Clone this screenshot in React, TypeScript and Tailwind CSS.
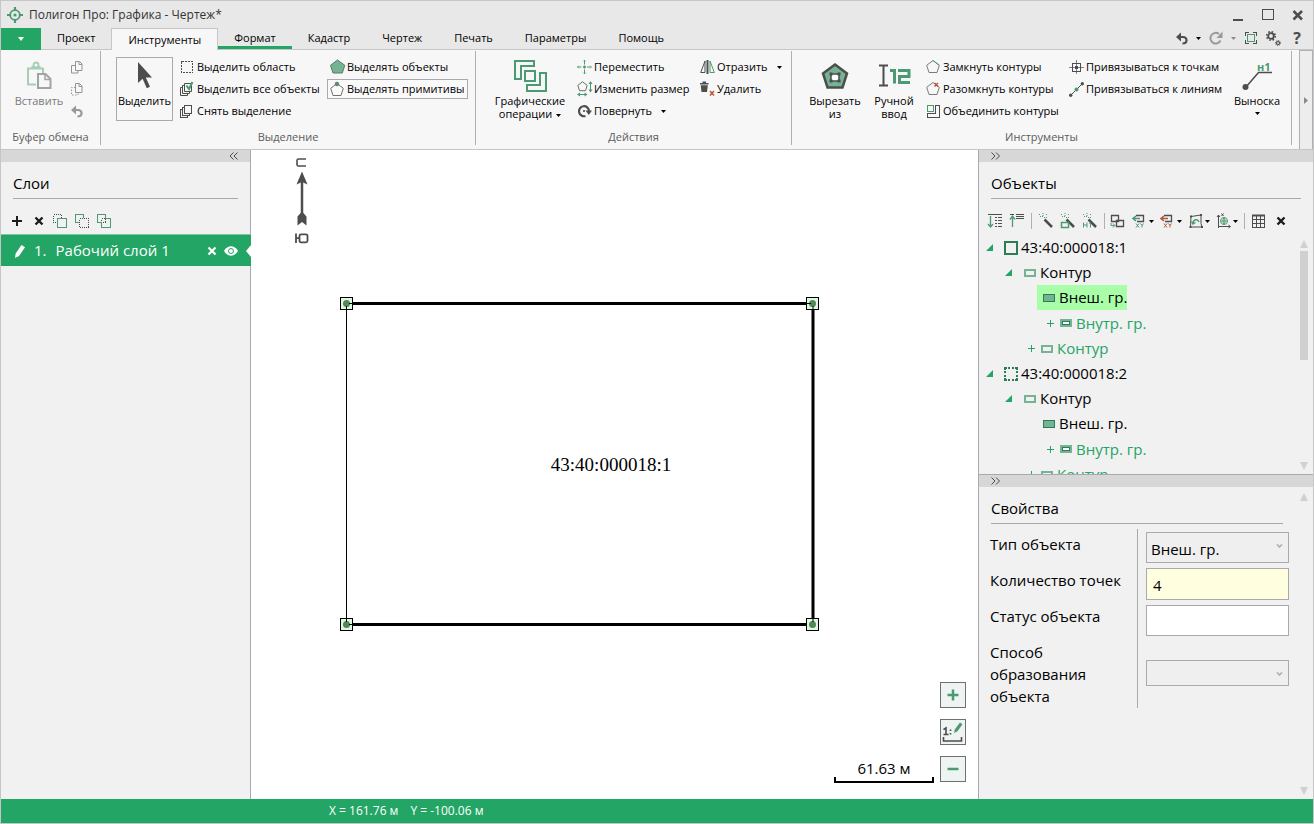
import type { ReactNode } from "react";
import { clsx } from "clsx";

const GREEN = "#4c9a71";
const DARK = "#4d4d4d";
const RED = "#b5573a";

interface IconProps {
  w?: number;
  h?: number;
  crisp?: boolean;
  children: ReactNode;
}

function Icon({ w = 16, h = 16, crisp, children }: IconProps) {
  return (
    <svg
      width={w}
      height={h}
      viewBox={`0 0 ${w} ${h}`}
      fill="none"
      stroke={DARK}
      className="block shrink-0"
      shapeRendering={crisp ? "crispEdges" : undefined}
      aria-hidden="true"
    >
      {children}
    </svg>
  );
}

function Caret({ className = "text-black" }: { className?: string }) {
  return (
    <svg width="5" height="3" viewBox="0 0 5 3" className={clsx("inline-block shrink-0", className)} aria-hidden="true">
      <path d="M0 0h5L2.5 3z" fill="currentColor" />
    </svg>
  );
}

/* ---------- ribbon icons ---------- */

const PENTAGON = "M7 1.5 13.3 6.3 11 13.5H3L.7 6.3z";

const LogoIcon = () => (
  <Icon>
    <g stroke={GREEN}>
      <circle cx="8" cy="8" r="4.8" strokeWidth="1.8" />
      <path d="M8 0v4M8 12v4M0 8h4M12 8h4" strokeWidth="2.2" />
      <circle cx="8" cy="8" r="1.6" fill={GREEN} stroke="none" />
    </g>
  </Icon>
);

const PasteIcon = () => (
  <Icon w={26} h={30}>
    <path d="M10 23.5H2v-16h15V12" stroke="#a6cdb8" strokeWidth="2" />
    <path d="M5.5 7.5V5h9v2.5z" fill="#a6cdb8" stroke="none" />
    <circle cx="10" cy="4" r="2.5" fill="#f7f7f7" stroke="#a6cdb8" strokeWidth="1.8" />
    <path d="M12 13h7.5l5 5v9H12z" stroke="#a3a3a3" strokeWidth="2" fill="#f7f7f7" />
    <path d="M19 13v5.5h5.5" stroke="#a3a3a3" strokeWidth="1.5" />
  </Icon>
);

const CopyIcon = () => (
  <Icon w={12} h={13}>
    <path d="M4.500.5h4l2.500 2.500v6.500H4.500zM8 .5v3h3M4.500 4.500h-4v7.500h6.500V9.500" stroke="#949494" />
  </Icon>
);

const CutIcon = () => (
  <Icon w={12} h={13}>
    <path d="M4.500.5h4l2.500 2.500v6.500H4.500zM8 .5v3h3" stroke="#949494" />
    <path d="M4.500 4.500h-4v7.500h6.500V9.500" strokeDasharray="1.5 1.5" stroke="#949494" />
  </Icon>
);

const UndoIcon = ({ pale }: { pale?: boolean }) => (
  <Icon w={12} h={13}>
    <g opacity={pale ? 0.55 : 1}>
      <path d="M3 5h4c4.800 0 4.800 6.500-.5 6.500" strokeWidth="2.2" />
      <path d="M0 5 5 .5v9z" fill={DARK} stroke="none" />
    </g>
  </Icon>
);

const RedoIcon = () => (
  <Icon w={14} h={14}>
    <g opacity="0.5">
      <path d="M11.500 9.500A5.300 5.300 0 1 1 10 3" strokeWidth="2" />
      <path d="M13.500.5v6.500H7.500z" fill={DARK} stroke="none" />
    </g>
  </Icon>
);

const CursorIcon = () => (
  <Icon w={24} h={30}>
    <path d="M5 1v21l4.600-4.200 4.200 9.400 3.200-1.400-4.200-9.200h6.200z" fill={DARK} stroke="none" />
  </Icon>
);

const AreaIcon = () => (
  <Icon crisp>
    <rect x="1.5" y="2.5" width="11" height="11" strokeDasharray="2 1" />
  </Icon>
);

const AllIcon = ({ checked }: { checked?: boolean }) => (
  <Icon crisp={!checked}>
    <path d="M4.500 2.500h7v8h-7zM4.500 4.500h-2v8h7v-2M2.500 6.500h-2v8h7v-2" />
    {checked && <path d="m6.500 4.500 2.500 3.500 3.500-7" stroke={GREEN} strokeWidth="2" />}
  </Icon>
);

const PolyFilledIcon = () => (
  <Icon>
    <path d="M7.500 1 14.800 6.300 12.300 14H3L.5 6.300z" fill="#74b494" stroke="#5d7a6a" />
  </Icon>
);

const PolyVertexIcon = () => (
  <Icon>
    <path d="M7 2.500 13.300 7.300 11 14.500H3L.7 7.300z" stroke="#707070" />
    <circle cx="7" cy="3" r="1.8" fill={GREEN} stroke="#5d7a6a" />
  </Icon>
);

const OperationsIcon = () => (
  <Icon w={34} h={34} crisp>
    <g stroke={GREEN} strokeWidth="2">
      <path d="M2 2h19v5H8v13H2z" />
      <path d="M12 12h10v10H12zM27 14h6v18H14v-6h13z" />
    </g>
  </Icon>
);

const MoveIcon = () => (
  <Icon>
    <path d="M7.500 1v4.500M7.500 10.500v4.500M0 8h4.500M10 8h4.500" stroke={GREEN} />
    <path d="M7.500 6.500v3M6 8h3" stroke={GREEN} strokeWidth="1.5" />
    <path d="m6 2.500 1.500-1.500L9 2.500M6 13.500 7.500 15 9 13.500M2 6.500.5 8 2 9.500M13 6.500 14.500 8 13 9.500" stroke={GREEN} opacity="0.5" />
  </Icon>
);

const ResizeIcon = () => (
  <Icon>
    <path d="m5.500.8 4.700 3.600-1.700 5.300H2.500L.8 4.400z" stroke="#707070" />
    <path d="M13.500 2v8M2 13.500h7" stroke={GREEN} />
    <path d="m13.500 0 2 3h-4zM13.500 11.500l2-3h-4zM0 13.500l3-2v4zM10.500 13.500l-3-2v4z" fill={GREEN} stroke="none" />
  </Icon>
);

const RotateIcon = () => (
  <Icon>
    <path d="M8.500 13A5 5 0 1 1 12 8" strokeWidth="2.2" />
    <path d="M8.500 7.500H15L11.800 12z" fill={DARK} stroke="none" />
    <circle cx="7" cy="8" r="1.1" fill={DARK} stroke="none" />
  </Icon>
);

const MirrorIcon = () => (
  <Icon>
    <path d="M7.500 1v14" strokeWidth="2" />
    <path d="M5 2v11.500H.7z" />
    <path d="M10 2v11.500h4.300z" stroke={GREEN} />
  </Icon>
);

const TrashIcon = () => (
  <Icon>
    <path d="M0 2h8.500v1.500H0zM2.500.5h3.500V2H2.500zM.7 4.200h7.100L7 11H1.500z" fill={DARK} stroke="none" />
    <path d="m10 10 4 4.500m0-4.500-4 4.500" stroke={RED} strokeWidth="1.5" />
  </Icon>
);

const CutOutIcon = () => (
  <Icon w={28} h={28}>
    <path d="M14 2.500 26 11.500 21.500 25.500h-15L2 11.500z" fill="#74b494" strokeWidth="2.5" />
    <path d="M10 12h8v7h-8z" fill="#fff" strokeWidth="1.5" />
    <path d="M8.500 10.500h3v3h-3zM16.500 10.500h3v3h-3zM8.500 17.500h3v3h-3zM16.500 17.500h3v3h-3z" fill={DARK} stroke="none" />
  </Icon>
);

const ManualIcon = () => (
  <Icon w={34} h={28}>
    <path d="M2 3.500h9M2 23.500h9M6.500 3v21" strokeWidth="2" />
    <path d="M13 8.500h4.500v13M21 8.500h11v6H22.500v6H33" stroke={GREEN} strokeWidth="3" />
  </Icon>
);

const ClosePolyIcon = () => (
  <Icon>
    <path d={PENTAGON} stroke="#7a7a7a" />
    <path d="M7 1.500 13.300 6.300" stroke={GREEN} />
  </Icon>
);

const OpenPolyIcon = () => (
  <Icon>
    <path d={PENTAGON} stroke="#7a7a7a" />
    <path d="m8.500 2 3.500 3.500M12 2 8.500 5.500" stroke={RED} strokeWidth="1.5" />
  </Icon>
);

const MergeIcon = () => (
  <Icon crisp>
    <path d="M9.500 2.500h4v12H1.500v-4h8z" />
    <path d="M1.500 2.500h6v6h-6z" stroke={GREEN} />
  </Icon>
);

const SnapPointIcon = () => (
  <Icon crisp>
    <path d="M7.500 1v14M0 8.500h15" stroke="#808080" />
    <path d="M3.500 4.500h8v8h-8z" />
    <path d="M6 7h3v3H6z" fill={DARK} stroke="none" />
  </Icon>
);

const SnapLineIcon = () => (
  <Icon>
    <path d="M1.500 14.500 13.500 2.500" />
    <circle cx="1.7" cy="14.3" r="1.7" fill={DARK} stroke="none" />
    <circle cx="13.3" cy="2.7" r="1.7" fill={DARK} stroke="none" />
    <circle cx="7.5" cy="8.500" r="2" fill={GREEN} stroke="none" />
  </Icon>
);

const CalloutIcon = () => (
  <svg width="32" height="32" viewBox="0 0 32 32" fill="none" className="block" aria-hidden="true">
    <path d="M5 27 17.500 12.500H31" stroke={DARK} strokeWidth="1.5" />
    <circle cx="4.5" cy="27" r="3" fill={DARK} />
    <text x="16" y="11" fontSize="11" fontWeight="700" fill={GREEN} fontFamily="Open Sans, sans-serif">
      н1
    </text>
  </svg>
);

/* ---------- ribbon parts ---------- */

function SmallButton({ icon, label, active, caret }: { icon: ReactNode; label: string; active?: boolean; caret?: boolean }) {
  return (
    <div className="flex h-[22px] items-center">
      <button
        type="button"
        className={clsx(
          "flex h-5 items-center gap-px border px-0.5 whitespace-nowrap",
          active ? "border-[#a9a9b0] bg-[#fafafa]" : "border-transparent"
        )}
      >
        {icon}
        <span>{label}</span>
        {caret && <Caret className="ml-2 text-black" />}
      </button>
    </div>
  );
}

function BigButton({ icon, label, active, disabled, caret, className }: {
  icon: ReactNode;
  label: string;
  active?: boolean;
  disabled?: boolean;
  caret?: "inline" | "below";
  className?: string;
}) {
  return (
    <button
      type="button"
      disabled={disabled}
      className={clsx(
        "mt-px flex h-16 shrink-0 flex-col items-center border leading-[13px]",
        active ? "border-[#a9a9b0]" : "border-transparent",
        disabled && "text-[#7b7b7b]",
        className
      )}
    >
      <span className="flex h-9 items-center justify-center">{icon}</span>
      <span className="text-center whitespace-pre-line">
        {label}
        {caret === "inline" && <Caret className="ml-1 align-middle text-black" />}
      </span>
      {caret === "below" && (
        <span className="flex h-3 items-center">
          <Caret />
        </span>
      )}
    </button>
  );
}

function RibbonGroup({ title, className, children }: { title: string; className?: string; children: ReactNode }) {
  return (
    <section className="mt-px mb-1 flex shrink-0 flex-col border-r border-[#b0b0b4] pt-[5px]">
      <div className={clsx("flex h-[73px] shrink-0 items-start", className)}>{children}</div>
      <h2 className="text-center leading-4 text-[#5c5c5c]">{title}</h2>
    </section>
  );
}

function Ribbon() {
  return (
    <div className="flex h-[100px] shrink-0 border-b border-[#c6c6c6] bg-[#f7f7f7] text-[11px]">
      <div className="flex min-w-0 flex-1 overflow-hidden">
        <RibbonGroup title="Буфер обмена" className="w-[99px] pl-2.5">
          <BigButton icon={<PasteIcon />} label="Вставить" disabled className="w-14" />
          <div className="flex flex-col pl-1">
            <button type="button" aria-label="Копировать" className="flex h-[22px] items-center"><CopyIcon /></button>
            <button type="button" aria-label="Вырезать" className="flex h-[22px] items-center"><CutIcon /></button>
            <button type="button" aria-label="Отменить" className="flex h-[22px] items-center"><UndoIcon pale /></button>
          </div>
        </RibbonGroup>

        <RibbonGroup title="Выделение" className="pr-1.5 pl-[15px]">
          <BigButton icon={<CursorIcon />} label="Выделить" active className="w-[57px]" />
          <div className="ml-1 w-[150px]">
            <SmallButton icon={<AreaIcon />} label="Выделить область" />
            <SmallButton icon={<AllIcon checked />} label="Выделить все объекты" />
            <SmallButton icon={<AllIcon />} label="Снять выделение" />
          </div>
          <div className="w-[142px]">
            <SmallButton icon={<PolyFilledIcon />} label="Выделять объекты" />
            <SmallButton icon={<PolyVertexIcon />} label="Выделять примитивы" active />
          </div>
        </RibbonGroup>

        <RibbonGroup title="Действия" className="pr-1.5 pl-3.5">
          <BigButton icon={<OperationsIcon />} label={"Графические\nоперации"} caret="inline" className="w-20" />
          <div className="ml-1 w-[123px]">
            <SmallButton icon={<MoveIcon />} label="Переместить" />
            <SmallButton icon={<ResizeIcon />} label="Изменить размер" />
            <SmallButton icon={<RotateIcon />} label="Повернуть" caret />
          </div>
          <div className="w-[88px]">
            <SmallButton icon={<MirrorIcon />} label="Отразить" caret />
            <SmallButton icon={<TrashIcon />} label="Удалить" />
          </div>
        </RibbonGroup>

        <RibbonGroup title="Инструменты" className="pr-1.5 pl-[13px]">
          <BigButton icon={<CutOutIcon />} label={"Вырезать\nиз"} className="w-[60px]" />
          <BigButton icon={<ManualIcon />} label={"Ручной\nввод"} className="w-[58px]" />
          <div className="w-[143px]">
            <SmallButton icon={<ClosePolyIcon />} label="Замкнуть контуры" />
            <SmallButton icon={<OpenPolyIcon />} label="Разомкнуть контуры" />
            <SmallButton icon={<MergeIcon />} label="Объединить контуры" />
          </div>
          <div className="w-[163px]">
            <SmallButton icon={<SnapPointIcon />} label="Привязываться к точкам" />
            <SmallButton icon={<SnapLineIcon />} label="Привязываться к линиям" />
          </div>
          <BigButton icon={<CalloutIcon />} label="Выноска" caret="below" className="w-14" />
        </RibbonGroup>
      </div>
      <button type="button" aria-label="Прокрутить" className="flex w-3.5 items-center justify-center border border-b-0 border-[#b0b0b4] bg-[#ededed]">
        <svg width="4" height="7" viewBox="0 0 4 7" aria-hidden="true"><path d="M0 0v7l4-3.500z" fill="#8a8a8a" /></svg>
      </button>
    </div>
  );
}

/* ---------- title and tabs ---------- */

function TitleBar() {
  return (
    <header className="flex h-[27px] shrink-0 items-center pr-[9px] pl-1.5">
      <LogoIcon />
      <h1 className="ml-1.5 flex-1 text-xs text-[#333]">Полигон Про: Графика - Чертеж*</h1>
      <div className="flex items-center gap-[18px]">
        <button type="button" aria-label="Свернуть">
          <Icon w={12} h={14} crisp><path d="M1 12h10" strokeWidth="2" /></Icon>
        </button>
        <button type="button" aria-label="Развернуть">
          <Icon w={12} h={14} crisp><path d="M0 1h12M.5 1v11M11.500 1v11M0 11.500h12" /></Icon>
        </button>
        <button type="button" aria-label="Закрыть">
          <Icon w={12} h={14}><path d="m1.500 3 8.500 8.500M10 3 1.500 11.500" strokeWidth="2.5" /></Icon>
        </button>
      </div>
    </header>
  );
}

const TABS = ["Проект", "Инструменты", "Формат", "Кадастр", "Чертеж", "Печать", "Параметры", "Помощь"];

function TabBar() {
  return (
    <nav className="flex h-[22px] shrink-0 items-end text-[11px]">
      <button type="button" aria-label="Меню" className="flex h-[22px] w-10 items-center justify-center bg-[#22a565]">
        <svg width="6" height="4" viewBox="0 0 6 4" aria-hidden="true"><path d="M0 0h6L3 4z" fill="#fff" /></svg>
      </button>
      <div className="flex h-[22px] flex-1 border-b border-[#c6c6c6]">
        {TABS.map((tab) => (
          <button
            key={tab}
            type="button"
            className={clsx(
              "flex items-center px-4 leading-4",
              tab === "Инструменты" && "h-[22px] border border-b-0 border-[#c6c6c6] bg-[#f7f7f7]",
              tab === "Формат" && "h-[21px] border-b-3 border-[#22a565] pt-px",
              tab !== "Инструменты" && tab !== "Формат" && "h-5"
            )}
          >
            {tab}
          </button>
        ))}
        <div className="ml-auto flex h-5 items-center gap-2 pr-2">
          <button type="button" aria-label="Отменить"><UndoIcon /></button>
          <Caret />
          <button type="button" aria-label="Повторить"><RedoIcon /></button>
          <Caret className="text-[#8a8a8a]" />
          <button type="button" aria-label="Во весь экран">
            <Icon w={14} h={14} crisp>
              <path d="M1.500 5V1.500H5M9 1.500h3.500V5M12.500 9v3.500H9M5 12.500H1.500V9" />
              <path d="M3.500 3.500h7v7h-7z" stroke={GREEN} />
            </Icon>
          </button>
          <button type="button" aria-label="Настройки">
            <Icon w={15} h={15}>
              <circle cx="5" cy="5" r="2.8" strokeWidth="1.8" />
              <circle cx="5" cy="5" r="4.3" strokeWidth="1.5" strokeDasharray="1.7 1.68" />
              <circle cx="12" cy="12" r="1.5" strokeWidth="1.2" />
              <circle cx="12" cy="12" r="2.5" strokeDasharray="1 0.96" />
            </Icon>
          </button>
          <button type="button" className="w-4 text-base leading-5 font-bold text-[#4d4d4d]">?</button>
        </div>
      </div>
    </nav>
  );
}

/* ---------- layers panel ---------- */

function LayersPanel() {
  return (
    <aside className="flex w-[250px] shrink-0 flex-col border-r border-[#a9a9b0] bg-[#f1f1f1]">
      <div className="flex h-3 items-center justify-end bg-[#d7d7d7] pr-3">
        <button type="button" aria-label="Свернуть панель слоёв">
          <Icon w={9} h={8}><path d="M4.500.5 1 4l3.500 3.500M8.500.5 5 4l3.500 3.500" /></Icon>
        </button>
      </div>
      <h2 className="mx-3 mt-2.5 border-b border-[#a9a9a9] pb-1 text-[15px] leading-[22px]">Слои</h2>
      <div className="flex h-[22px] items-center gap-2 mt-[11px] mb-0.5 pl-2">
        <button type="button" aria-label="Добавить слой">
          <Icon w={14} h={14}><path d="M3 7h10M8 2v10" stroke="#1c1c1c" strokeWidth="2" /></Icon>
        </button>
        <button type="button" aria-label="Удалить слой">
          <Icon w={14} h={14}><path d="m4.500 3.500 7 7M11.500 3.500l-7 7" stroke="#1c1c1c" strokeWidth="2.4" /></Icon>
        </button>
        <button type="button" aria-label="Переместить вверх">
          <Icon w={14} h={14} crisp>
            <path d="M4.500 8.500h-4v-8h8v4" strokeDasharray="1 1" />
            <path d="M4.500 4.500h9v9h-9z" stroke={GREEN} />
          </Icon>
        </button>
        <button type="button" aria-label="Переместить вниз">
          <Icon w={14} h={14} crisp>
            <path d="M4.500 4.500h9v9h-9z" strokeDasharray="1 1" />
            <path d="M3.500 8.500h-3v-8h8v3" stroke={GREEN} />
          </Icon>
        </button>
        <button type="button" aria-label="Объединить слои">
          <Icon w={14} h={14} crisp>
            <path d="M4.500 4.500h4v4h-4z" strokeDasharray="1 1" />
            <path d="M4.500 8.500h-4v-8h8v4M8.500 4.500h5v9h-9v-5" stroke={GREEN} />
          </Icon>
        </button>
      </div>
      <div className="-mr-px flex h-8 items-center border-t border-[#7fc9a2] bg-[#22a565] pl-3 text-[15px] text-white">
        <Icon w={14} h={16}><path d="m2 15 .7-4.500L8.500 2l3.500 2.300L6 13z" fill="#fff" stroke="none" /></Icon>
        <span className="ml-[7px]">1.</span>
        <span className="ml-[9px] flex-1">Рабочий слой 1</span>
        <button type="button" aria-label="Убрать слой">
          <Icon w={10} h={10}><path d="m1.500 1.500 7 7M8.500 1.500l-7 7" stroke="#fff" strokeWidth="2.2" /></Icon>
        </button>
        <button type="button" aria-label="Видимость слоя" className="ml-[7px]">
          <Icon w={14} h={10}>
            <path d="M0 5c3.500-6.200 10.500-6.200 14 0-3.500 6.200-10.500 6.200-14 0z" fill="#fff" stroke="none" />
            <circle cx="7" cy="5" r="2.5" stroke="#22a565" />
          </Icon>
        </button>
        <svg width="5" height="12" viewBox="0 0 5 12" className="ml-2" aria-hidden="true">
          <path d="M5 0v12L0 6z" fill="#fff" />
        </svg>
      </div>
    </aside>
  );
}

/* ---------- drawing canvas ---------- */

const CORNERS = [
  [95, 153],
  [561, 153],
  [95, 474],
  [561, 474],
];

function Drawing() {
  return (
    <main className="relative min-w-0 flex-1 bg-white">
      <svg viewBox="0 0 727 649" className="block h-full w-full" role="img" aria-label="Чертеж участка">
        <path d="M95.500 153.500v321" stroke="#000" fill="none" />
        <path d="M95.500 153.500H562V474.500H95.500" stroke="#000" strokeWidth="3" fill="none" />
        {CORNERS.map(([x, y]) => (
          <g key={`${x}-${y}`}>
            <rect x={x - 5.5} y={y - 5.5} width="12" height="12" fill="#e3f5e3" stroke="#000" />
            <circle cx={x + 0.5} cy={y + 0.5} r="3.5" fill="#4f8a55" />
          </g>
        ))}
        <path d="M95.500 156v4M98 153.500h4M95.500 468v4M98 474.500h4M562 156v4M555 153.500h5M562 468v4" stroke="#000" />
        <text x="360" y="321" textAnchor="middle" fontSize="19" fontFamily="Liberation Serif, serif">
          43:40:000018:1
        </text>
      </svg>

      <svg width="16" height="92" viewBox="0 0 16 92" fill="none" className="absolute top-1.5 left-[43px]" aria-label="Север и юг">
        <path d="M12 3H4.500q-1.500 0-1.500 1.500v4Q3 10 4.500 10H12" stroke={DARK} strokeWidth="1.6" />
        <path d="M8 26v36" stroke={DARK} strokeWidth="2.5" />
        <path d="M8 15.500 13.500 28.500 8 26 2.500 28.500zM3.500 60.500 8 55.500l4.500 5v9L8 66 3.500 69.500z" fill={DARK} />
        <path d="M2 77.500V87M2 82.200H5.500M7 78.300h5q1.500 0 1.500 1.500v5q0 1.500-1.500 1.500H7q-1.500 0-1.500-1.500v-5q0-1.500 1.500-1.500z" stroke={DARK} strokeWidth="1.8" />
      </svg>

      <div className="absolute right-11 bottom-4 w-[100px] border-2 border-t-0 border-black text-center">
        <div className="-mt-[21px] pb-px text-[15px] leading-6">61.63 м</div>
      </div>

      <div className="absolute right-3 bottom-[17px] flex flex-col gap-[11px]">
        <button type="button" aria-label="Приблизить" className="flex size-[26px] items-center justify-center border border-[#707070] bg-[#eef4f2]">
          <Icon w={12} h={12}><path d="M.5 6h11M6 .5v11" stroke={GREEN} strokeWidth="2.5" /></Icon>
        </button>
        <button type="button" aria-label="Масштаб" className="flex size-[26px] items-center justify-center border border-[#707070] bg-[#eef4f2]">
          <Icon w={22} h={22}>
            <path d="M1.500 16v4h18v-4M1.500 8.500 4 7v6.500M1.500 13.500h5M8.500 8.500v1.500M8.500 12v1.500" strokeWidth="1.6" />
            <path d="m12 12 .8-3.500L18 1.500l2.500 1.800-5 7z" fill={GREEN} stroke="none" />
          </Icon>
        </button>
        <button type="button" aria-label="Отдалить" className="flex size-[26px] items-center justify-center border border-[#707070] bg-[#eef4f2]">
          <Icon w={12} h={12}><path d="M.5 6h11" stroke={GREEN} strokeWidth="2.5" /></Icon>
        </button>
      </div>
    </main>
  );
}

/* ---------- objects panel ---------- */

function PanelStrip({ label }: { label: string }) {
  return (
    <div className="flex h-3 shrink-0 items-center bg-[#d7d7d7] pl-3">
      <button type="button" aria-label={label}>
        <Icon w={10} h={8}><path d="M.5.5 4 4 .5 7.500M5 .5 8.500 4 5 7.500" /></Icon>
      </button>
    </div>
  );
}

const Wand = () => (
  <>
    <path d="m6.500 6.500 7.500 7.500" strokeWidth="2.5" />
    <path d="M5 0v3M2 3.500h3M6 4.500h3M1.500 1v1M8.500 1v1.500" stroke={GREEN} strokeDasharray="1 1" />
  </>
);

const Divider = () => <span className="h-4 w-px shrink-0 bg-[#b0b0b4]" />;

function Tool({ label, caret, children }: { label: string; caret?: boolean; children: ReactNode }) {
  return (
    <button type="button" aria-label={label} className="flex shrink-0 items-center gap-px">
      <Icon>{children}</Icon>
      {caret && <Caret />}
    </button>
  );
}

function ObjectTools() {
  return (
    <div className="mt-[11px] flex h-[22px] shrink-0 items-center justify-between pr-6 pl-2">
      <Tool label="Развернуть дерево">
        <path d="M1 1.500h14M8 4.500h2M11 4.500h4M8 7.500h2M11 7.500h4M8 10.500h2M11 10.500h4M8 13.500h2M11 13.500h4" />
        <path d="M3.500 3v10M1 11l2.500 3L6 11" stroke={GREEN} strokeWidth="1.3" />
      </Tool>
      <Tool label="Свернуть дерево">
        <path d="M1 1.500h4M7 1.500h8M7 3.500h8M7 5.500h8" />
        <path d="M3.500 14V4M1 6.500 3.500 3 6 6.500" stroke={GREEN} strokeWidth="1.3" />
      </Tool>
      <Divider />
      <Tool label="Мастер"><Wand /></Tool>
      <Tool label="Мастер контуров"><Wand /><path d="M1.500 9.500h7v5h-7z" stroke={GREEN} strokeWidth="1.5" /></Tool>
      <Tool label="Мастер точек"><Wand /><path d="M1.500 9.500v5M1.500 12h3.500M5 9.500v5M7 10.500l1.500-1v5" stroke={GREEN} /></Tool>
      <Divider />
      <Tool label="Копировать объект">
        <path d="M1.500 2.500h7v6h-7zM6.500 7.500h7v6h-7z" strokeWidth="1.3" />
        <path d="M1 10v2.500h3.500M3 10.500l2 2-2 2" stroke={GREEN} />
      </Tool>
      <Tool label="Импорт координат" caret>
        <path d="M4 2.500h7.500v6H5" strokeWidth="1.3" />
        <path d="M1 5.500h7M4 3 1 5.500 4 8" stroke={GREEN} strokeWidth="1.5" />
        <path d="m4 10.500 3 4m0-4-3 4M8.500 10.500l1.500 2 1.500-2M10 12.500v2" stroke={GREEN} />
      </Tool>
      <Tool label="Экспорт координат" caret>
        <path d="M4 2.500h7.500v6H5" strokeWidth="1.3" />
        <path d="M1 5.500h7M4 3 1 5.500 4 8" stroke={RED} strokeWidth="1.5" />
        <path d="m4 10.500 3 4m0-4-3 4M8.500 10.500l1.500 2 1.500-2M10 12.500v2" stroke={RED} />
      </Tool>
      <Tool label="Направление обхода" caret>
        <path d="M3 3.500 13 2v8.500L14 14H2.500z" />
        <path d="M2 2.500h2v2H2zM12 1h2v2h-2zM1.500 13h2v2h-2zM13 13h2v2h-2z" fill={DARK} stroke="none" />
        <path d="M5 10.500c0-4.500 5-5 6-1.500M3.500 8.500 5 11l2.500-1.500" stroke={GREEN} strokeWidth="1.4" />
      </Tool>
      <Tool label="Система координат" caret>
        <path d="M2.500 15V2M1 4l1.500-2L4 4M2 13.500h12M12.500 12l2 1.500-2 1.500M5.500.5l2 2.500m0-2.500-2 2.500" />
        <circle cx="8" cy="8" r="3.5" stroke={GREEN} />
        <path d="M4.500 8h7M8 4.500v7M8 4.500q-3 3.500 0 7M8 4.500q3 3.500 0 7" stroke={GREEN} strokeWidth="0.8" />
      </Tool>
      <Divider />
      <Tool label="Таблица">
        <path d="M1.500 2.500h12v12h-12zM1.500 6.500h12M1.500 10.500h12M5.500 2.500v12M9.500 2.500v12" shapeRendering="crispEdges" />
        <path d="M1 2.500h13" strokeWidth="2" />
      </Tool>
      <Tool label="Удалить">
        <path d="m4.500 4.500 7 7M11.500 4.500l-7 7" stroke="#1c1c1c" strokeWidth="2.4" />
      </Tool>
    </div>
  );
}

type NodeKind = "parcel" | "dashed" | "contour" | "outer" | "inner" | "addContour";

interface TreeNode {
  id: number;
  kind: NodeKind;
  label: string;
  selected?: boolean;
}

const TREE: TreeNode[] = [
  { id: 1, kind: "parcel", label: "43:40:000018:1" },
  { id: 2, kind: "contour", label: "Контур" },
  { id: 3, kind: "outer", label: "Внеш. гр.", selected: true },
  { id: 4, kind: "inner", label: "Внутр. гр." },
  { id: 5, kind: "addContour", label: "Контур" },
  { id: 6, kind: "dashed", label: "43:40:000018:2" },
  { id: 7, kind: "contour", label: "Контур" },
  { id: 8, kind: "outer", label: "Внеш. гр." },
  { id: 9, kind: "inner", label: "Внутр. гр." },
  { id: 10, kind: "addContour", label: "Контур" },
];

const INDENT: Record<NodeKind, string> = {
  parcel: "pl-[7px]",
  dashed: "pl-[7px]",
  contour: "pl-[26px]",
  outer: "pl-[58px]",
  inner: "pl-[67px]",
  addContour: "pl-12",
};

const Expander = () => (
  <svg width="7" height="7" viewBox="0 0 7 7" className="shrink-0" aria-hidden="true">
    <path d="M7 0v7H0z" fill="#22a565" />
  </svg>
);

function NodeIcon({ kind }: { kind: NodeKind }) {
  if (kind === "parcel" || kind === "dashed") {
    return (
      <Icon w={14} h={14} crisp>
        {kind === "parcel" && <rect x="1" y="1" width="12" height="12" stroke="#2c7d55" strokeWidth="2" />}
        {kind === "dashed" && (
          <path
            d="M0 1h3M4 1h2M8 1h2M11 1h3M0 13h3M4 13h2M8 13h2M11 13h3M1 0v3M1 4v2M1 8v2M1 11v3M13 0v3M13 4v2M13 8v2M13 11v3"
            stroke="#2c7d55"
            strokeWidth="2"
          />
        )}
      </Icon>
    );
  }
  return (
    <Icon w={12} h={8} crisp>
      {kind === "outer" && <rect x=".5" y=".5" width="11" height="7" fill="#74b494" stroke="#2c7d55" />}
      {kind === "inner" && (
        <>
          <rect x="0" y="0" width="12" height="8" fill="#74b494" stroke="none" />
          <rect x="2.5" y="2.5" width="7" height="3" fill="#fff" stroke="#2c7d55" />
        </>
      )}
      {(kind === "contour" || kind === "addContour") && <rect x="1" y="1" width="10" height="6" stroke="#74b494" strokeWidth="2" />}
    </Icon>
  );
}

function TreeRow({ node }: { node: TreeNode }) {
  const root = node.kind === "parcel" || node.kind === "dashed";
  const add = node.kind === "inner" || node.kind === "addContour";
  return (
    <li
      className={clsx(
        "flex items-center",
        node.kind === "inner" ? "h-[26px]" : "h-[25px]",
        add && "text-[#22a565]",
        INDENT[node.kind]
      )}
    >
      {(root || node.kind === "contour") && <Expander />}
      {add && <Icon w={9} h={9} crisp><path d="M1 4.500h7M4.500 1v7" stroke="#22a565" /></Icon>}
      <span
        className={clsx(
          "flex h-full items-center whitespace-nowrap",
          root && "ml-[11px] gap-[3px]",
          node.kind === "contour" && "ml-3 gap-1",
          node.kind === "outer" && "gap-1 pl-1.5",
          add && "ml-[5px] gap-1",
          node.selected && "bg-[#a8ffa8]"
        )}
      >
        <NodeIcon kind={node.kind} />
        {node.label}
      </span>
    </li>
  );
}

function ScrollArrow({ up }: { up?: boolean }) {
  return (
    <svg width="8" height="8" viewBox="0 0 8 8" className="block shrink-0" aria-hidden="true">
      <path d={up ? "M4 0 8 8H0z" : "M0 0h8L4 8z"} fill="#d0d0d0" />
    </svg>
  );
}

function ObjectsPanel() {
  return (
    <section className="flex h-[calc(50%-1px)] flex-col">
      <PanelStrip label="Свернуть панель объектов" />
      <h2 className="mx-3 mt-2.5 border-b border-[#a9a9a9] pb-1 text-[15px] leading-[22px]">Объекты</h2>
      <ObjectTools />
      <div className="mt-[3px] flex min-h-0 flex-1">
        <ul className="flex-1 overflow-hidden text-[15px]">
          {TREE.map((node) => (
            <TreeRow key={node.id} node={node} />
          ))}
        </ul>
        <div className="flex w-4 flex-col items-center pt-[5px] pb-1 pr-0.5">
          <ScrollArrow up />
          <div className="mt-[3px] h-[109px] w-2 bg-[#d0d0d0]" />
          <div className="flex-1" />
          <ScrollArrow />
        </div>
      </div>
    </section>
  );
}

/* ---------- properties panel ---------- */

const FIELD = "w-full rounded-none border border-[#a9a9b0] text-[15px]";

function SelectField({ id, value, className }: { id: string; value: string; className?: string }) {
  return (
    <div className="relative">
      <select id={id} defaultValue={value} className={clsx(FIELD, "block appearance-none bg-[#efeff0] px-1 pt-1", className)}>
        <option value={value}>{value}</option>
      </select>
      <svg width="7" height="5" viewBox="0 0 7 5" fill="none" className="pointer-events-none absolute top-3 right-1.5" aria-hidden="true">
        <path d="m1 .5 2.500 2.500L6 .5" stroke="#a9a9a9" strokeWidth="1.5" />
      </svg>
    </div>
  );
}

function PropertiesPanel() {
  return (
    <section className="flex min-h-0 flex-1 flex-col border-t border-[#a9a9b0]">
      <PanelStrip label="Свернуть панель свойств" />
      <div className="flex min-h-0 flex-1">
        <div className="min-w-0 flex-1">
          <h2 className="mr-3.5 ml-3 mt-2.5 border-b border-[#a9a9a9] pb-1 text-[15px] leading-[22px]">Свойства</h2>
          <div className="mt-[5px] mr-2 ml-[11px] grid grid-cols-[148px_1fr] text-[15px] leading-[22px]">
            <div className="flex h-[179px] flex-col border-r border-[#a9a9b0] pt-1">
              <label htmlFor="type" className="h-9">Тип объекта</label>
              <label htmlFor="points" className="h-9 whitespace-nowrap">Количество точек</label>
              <label htmlFor="status" className="h-9">Статус объекта</label>
              <label htmlFor="method" className="w-28">Способ образования объекта</label>
            </div>
            <div className="flex flex-col pt-[3px] pl-2">
              <SelectField id="type" value="Внеш. гр." className="h-[31px]" />
              <input id="points" defaultValue="4" className={clsx(FIELD, "mt-[5px] h-8 bg-[#ffffdf] px-1.5 pt-0.5")} />
              <input id="status" className={clsx(FIELD, "mt-[5px] mb-6 h-[31px] bg-white px-1.5")} />
              <SelectField id="method" value="" className="h-[26px]" />
            </div>
          </div>
        </div>
        <div className="flex w-4 flex-col items-center justify-between pt-1.5 pb-1 pr-0.5">
          <ScrollArrow up />
          <ScrollArrow />
        </div>
      </div>
    </section>
  );
}

export default function App() {
  return (
    <div className="flex h-screen flex-col overflow-hidden border border-[#c6c6c6] bg-[#e8e8e8] font-['Open_Sans','Noto_Sans',sans-serif] text-black">
      <TitleBar />
      <TabBar />
      <Ribbon />
      <div className="flex min-h-0 flex-1">
        <LayersPanel />
        <Drawing />
        <aside className="flex w-[335px] shrink-0 flex-col border-l border-[#a9a9b0] bg-[#f1f1f1]">
          <ObjectsPanel />
          <PropertiesPanel />
        </aside>
      </div>
      <footer className="flex h-6 shrink-0 items-center gap-3 bg-[#22a565] pl-[328px] text-xs text-white">
        <span>X = 161.76 м</span>
        <span>Y = -100.06 м</span>
      </footer>
    </div>
  );
}
